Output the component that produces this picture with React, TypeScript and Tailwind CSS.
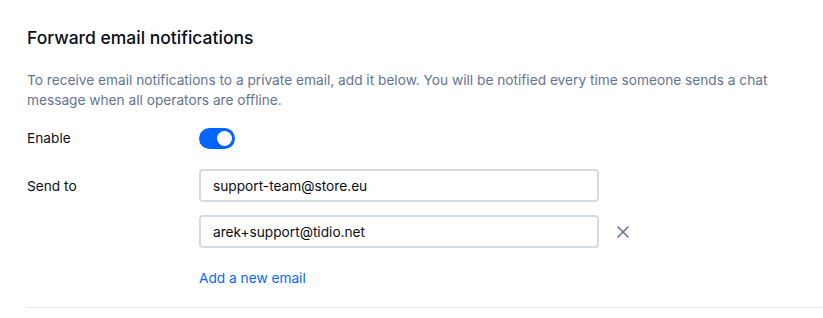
import React, { useState } from "react";

export default function App() {
  const [enabled, setEnabled] = useState(true);
  const [emails, setEmails] = useState(["support-team@store.eu", "arek+support@tidio.net"]);

  return (
    <main className="min-h-screen bg-white font-['Inter',sans-serif] text-[#080f1a]">
      <div className="pl-[27px] pt-[26px]">
        <h2 className="text-[17.5px] font-medium leading-[24px]">
          Forward email notifications
        </h2>
        <p className="mt-[20px] max-w-[760px] text-[13.7px] leading-[20px] text-[#647491]">
          To receive email notifications to a private email, add it below. You will be notified every time someone sends a chat message when all operators are offline.
        </p>

        <div className="mt-[18px] flex items-center">
          <span className="w-[172px] text-[13.7px]">Enable</span>
          <button
            onClick={() => setEnabled(!enabled)}
            className={`flex h-[21px] w-[36px] items-center rounded-full p-[3px] ${
              enabled ? "justify-end bg-[#0566ff]" : "justify-start bg-[#cad1dc]"
            }`}
          >
            <span className="h-[15px] w-[15px] rounded-full bg-white shadow" />
          </button>
        </div>

        <div className="mt-[20px] flex">
          <span className="w-[172px] pt-[7px] text-[13.7px]">Send to</span>
          <div className="flex flex-col gap-[13px]">
            {emails.map((email, i) => (
              <div key={i} className="flex items-center">
                <input
                  value={email}
                  onChange={(e) =>
                    setEmails(emails.map((v, j) => (j === i ? e.target.value : v)))
                  }
                  className="h-[33px] w-[400px] rounded-[4px] border-2 border-[#d3dbe5] px-[12px] text-[13.7px] text-[#080f1a] outline-none"
                />
                {i > 0 ? (
                  <button
                    onClick={() => setEmails(emails.filter((_, j) => j !== i))}
                    className="ml-[18px] text-[#647491]"
                  >
                    <svg width="12" height="12" viewBox="0 0 12 12" fill="none" stroke="currentColor" strokeWidth="1.6" strokeLinecap="round">
                      <path d="M1 1l10 10M11 1L1 11" />
                    </svg>
                  </button>
                ) : null}
              </div>
            ))}
            <button
              onClick={() => setEmails([...emails, ""])}
              className="mt-[7px] self-start text-[13.7px] leading-[20px] text-[#0566ff]"
            >
              Add a new email
            </button>
          </div>
        </div>
      </div>
      <div className="ml-[27px] mt-[19px] border-t border-[#e9ecef]" />
    </main>
  );
}
